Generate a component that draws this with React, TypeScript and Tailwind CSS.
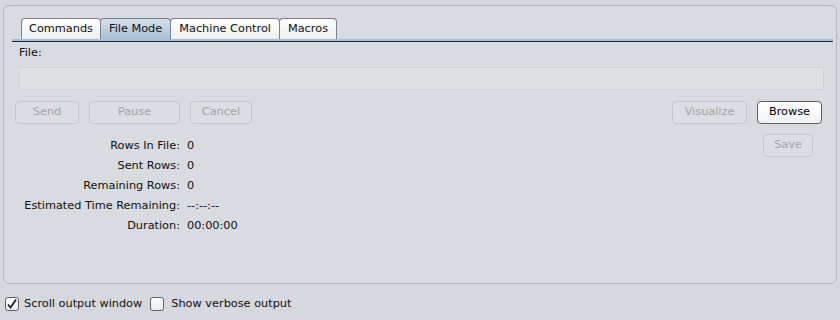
import React from 'react';

const font = { fontFamily: '"DejaVu Sans", "Liberation Sans", sans-serif' };

const tabs = ['Commands', 'File Mode', 'Machine Control', 'Macros'];

const Btn = ({ label, w, enabled = false }: { label: string; w: string; enabled?: boolean }) => (
  <div
    className={`${w} h-[23px] flex items-center justify-center rounded-[4px] border text-[11.3px] ${
      enabled
        ? 'border-[#5b5e63] bg-gradient-to-b from-white to-[#f1f2f4] text-black'
        : 'border-[#c3c6cb] bg-[#dadde1] text-[#a2a5aa]'
    }`}
  >
    {label}
  </div>
);

const stats = [
  ['Rows In File:', '0'],
  ['Sent Rows:', '0'],
  ['Remaining Rows:', '0'],
  ['Estimated Time Remaining:', '--:--:--'],
  ['Duration:', '00:00:00'],
];

const App = () => {
  return (
    <div className="w-[840px] h-[320px] bg-[#d5d8dd] pt-[5px] px-[3px] text-[#111]" style={font}>
      {/* tabbed panel */}
      <div className="h-[279px] rounded-[6px] border border-[#b3b6bb] bg-[#d8dbe0] pt-[12px] pl-[8px] pr-[3px]">
        <div className="flex pl-[9px] h-[21px]">
          {tabs.map((t, i) => (
            <div
              key={t}
              className={`h-[21px] flex items-center whitespace-nowrap text-[11.3px] border border-b-0 border-[#7d8087] rounded-t-[4px] ${
                i > 0 ? '-ml-px px-[8px]' : 'px-[7px]'
              } ${i === 1 ? 'bg-gradient-to-b from-[#d3dfea] to-[#a9c1d6]' : 'bg-gradient-to-b from-white to-[#eceef0]'}`}
            >
              {t}
            </div>
          ))}
        </div>
        <div className="h-[2px] bg-[#a8bfd3]" />
        <div className="h-[1px] bg-[#1c2a3c]" />

        <div className="pl-[3px] pr-[11px]">
          <div className="pl-[4px] pt-[4px] h-[25px] text-[11.3px] leading-[14px]">File:</div>
          <div className="ml-[4px] mr-[-2px] h-[23px] border border-[#cfd2d6] bg-[#dee0e4]" />

          <div className="mt-[11px] flex items-start">
            <Btn label="Send" w="w-[64px]" />
            <div className="ml-[10px]">
              <Btn label="Pause" w="w-[91px]" />
            </div>
            <div className="ml-[10px]">
              <Btn label="Cancel" w="w-[62px]" />
            </div>
            <div className="ml-auto">
              <Btn label="Visualize" w="w-[75px]" />
            </div>
            <div className="ml-[10px]">
              <Btn label="Browse" w="w-[65px]" enabled />
            </div>
          </div>

          <div className="flex">
            <div className="mt-[12px] grid grid-cols-[165px_auto] gap-x-[7px] text-[11.3px] leading-[20px] whitespace-nowrap">
              {stats.map(([k, v]) => (
                <React.Fragment key={k}>
                  <div className="text-right">{k}</div>
                  <div>{v}</div>
                </React.Fragment>
              ))}
            </div>
            <div className="ml-auto mr-[9px] mt-[10px]">
              <Btn label="Save" w="w-[50px]" />
            </div>
          </div>
        </div>
      </div>

      {/* bottom options */}
      <div className="mt-[12px] flex items-center text-[11.3px] pl-[2px]">
        <div className="w-[14px] h-[14px] rounded-[3px] border border-[#5e6167] bg-gradient-to-b from-white to-[#e9ebee] flex items-center justify-center">
          <svg width="12" height="12" viewBox="0 0 12 12">
            <path d="M2 6.5 L4.6 9.5 L10 1.5" fill="none" stroke="#1c2230" strokeWidth="1.8" />
          </svg>
        </div>
        <span className="ml-[5px]">Scroll output window</span>
        <div className="ml-[8px] w-[14px] h-[14px] rounded-[3px] border border-[#5e6167] bg-gradient-to-b from-white to-[#e9ebee]" />
        <span className="ml-[7px]">Show verbose output</span>
      </div>
    </div>
  );
};

export default App;
